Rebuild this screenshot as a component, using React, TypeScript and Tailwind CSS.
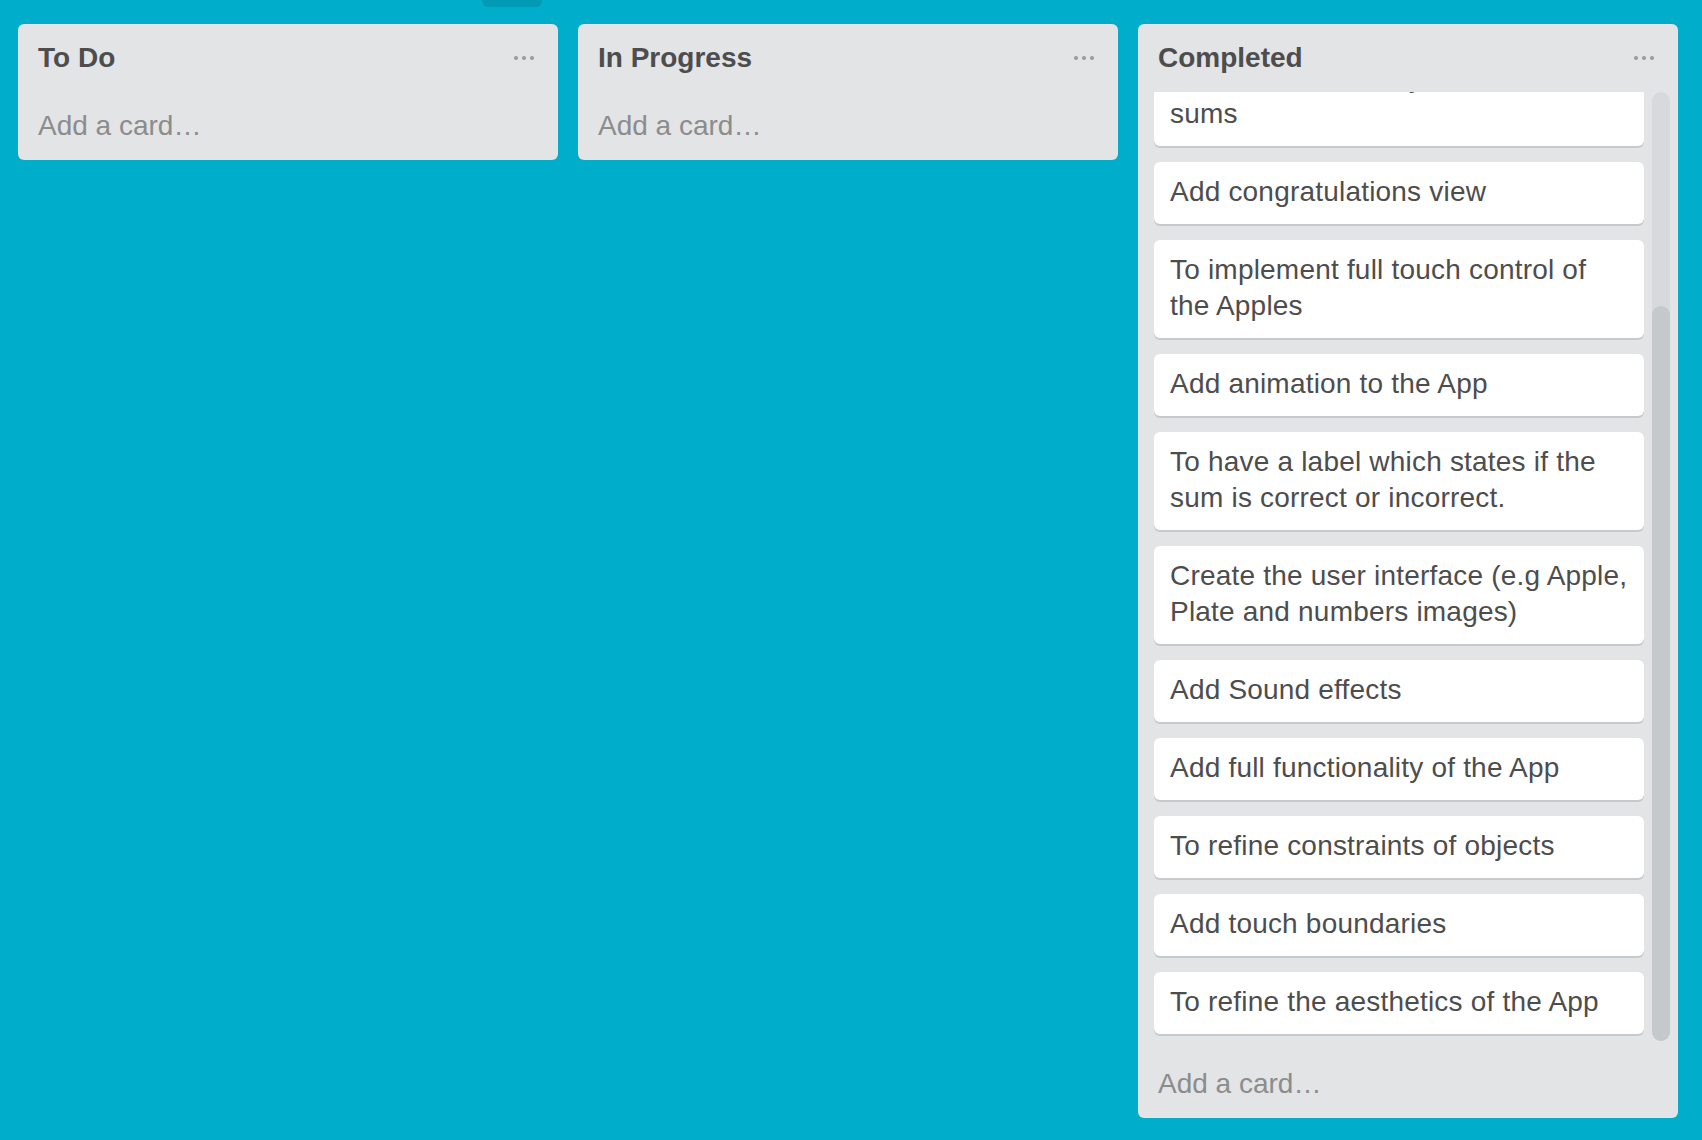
const font = "font-['Liberation_Sans',Arial,Helvetica,sans-serif]"

type Card = { lines: string[] }

// cards of the Completed list, top to bottom (the first few are scrolled out of view)
const completed: Card[] = [
    { lines: ['Add the main game screen'] },
    { lines: ['Add app icon and launch screen'] },
    { lines: ['Set up the Xcode project'] },
    { lines: ['Be able to randomly create the', 'sums'] },
    { lines: ['Add congratulations view'] },
    { lines: ['To implement full touch control of', 'the Apples'] },
    { lines: ['Add animation to the App'] },
    { lines: ['To have a label which states if the', 'sum is correct or incorrect.'] },
    { lines: ['Create the user interface (e.g Apple,', 'Plate and numbers images)'] },
    { lines: ['Add Sound effects'] },
    { lines: ['Add full functionality of the App'] },
    { lines: ['To refine constraints of objects'] },
    { lines: ['Add touch boundaries'] },
    { lines: ['To refine the aesthetics of the App'] },
]

const MenuDots = () => (
    <div className="flex gap-1 items-center">
        <span className="w-1 h-1 rounded-full bg-[#999]" />
        <span className="w-1 h-1 rounded-full bg-[#999]" />
        <span className="w-1 h-1 rounded-full bg-[#999]" />
    </div>
)

const ListHeader = ({ title }: { title: string }) => (
    <div className="flex items-center justify-between pl-5 pr-6 pt-4 pb-4">
        <h2 className="text-[28px] leading-[36px] font-bold text-[#4d4d4d]">{title}</h2>
        <MenuDots />
    </div>
)

const AddCard = () => (
    <div className="px-5 pt-4 pb-4 text-[28px] leading-[36px] text-[#8c8c8c]">Add a card…</div>
)

const CardItem = ({ card }: { card: Card }) => (
    <div className="shrink-0 mb-4 rounded-[6px] bg-white px-4 pt-3 pb-[14px] shadow-[0_2px_0_#c6cacd] text-[28px] leading-[36px] tracking-[0.2px] text-[#4d4d4d]">
        {card.lines.map((line, i) => (
            <div key={i} className="whitespace-nowrap">
                {line}
            </div>
        ))}
    </div>
)

const EmptyList = ({ title }: { title: string }) => (
    <div className="w-[540px] shrink-0 rounded-[6px] bg-[#e2e4e6]">
        <ListHeader title={title} />
        <AddCard />
    </div>
)

const CompletedList = () => (
    <div className="w-[540px] shrink-0 rounded-[6px] bg-[#e2e4e6]">
        <ListHeader title="Completed" />
        <div className="flex gap-2 pl-4 pr-2 h-[958px]">
            <div className="w-[490px] h-full overflow-hidden flex flex-col justify-end">
                {completed.map((card, index) => (
                    <CardItem key={index} card={card} />
                ))}
            </div>
            {/* scrollbar */}
            <div className="w-[18px] h-[949px] rounded-full bg-[#d6dadc] flex flex-col justify-end">
                <div className="h-[735px] rounded-full bg-[#c4c9cc]" />
            </div>
        </div>
        <AddCard />
    </div>
)

const App = () => {
    return (
        <div className={`w-full h-[1140px] bg-[#00aecc] overflow-hidden ${font}`}>
            <div className="ml-[482px] w-[60px] h-[7px] rounded-b-[6px] bg-[#009ab5]" />
            <div className="flex items-start gap-5 pl-[18px] mt-[17px]">
                <EmptyList title="To Do" />
                <EmptyList title="In Progress" />
                <CompletedList />
            </div>
        </div>
    )
}

export default App
